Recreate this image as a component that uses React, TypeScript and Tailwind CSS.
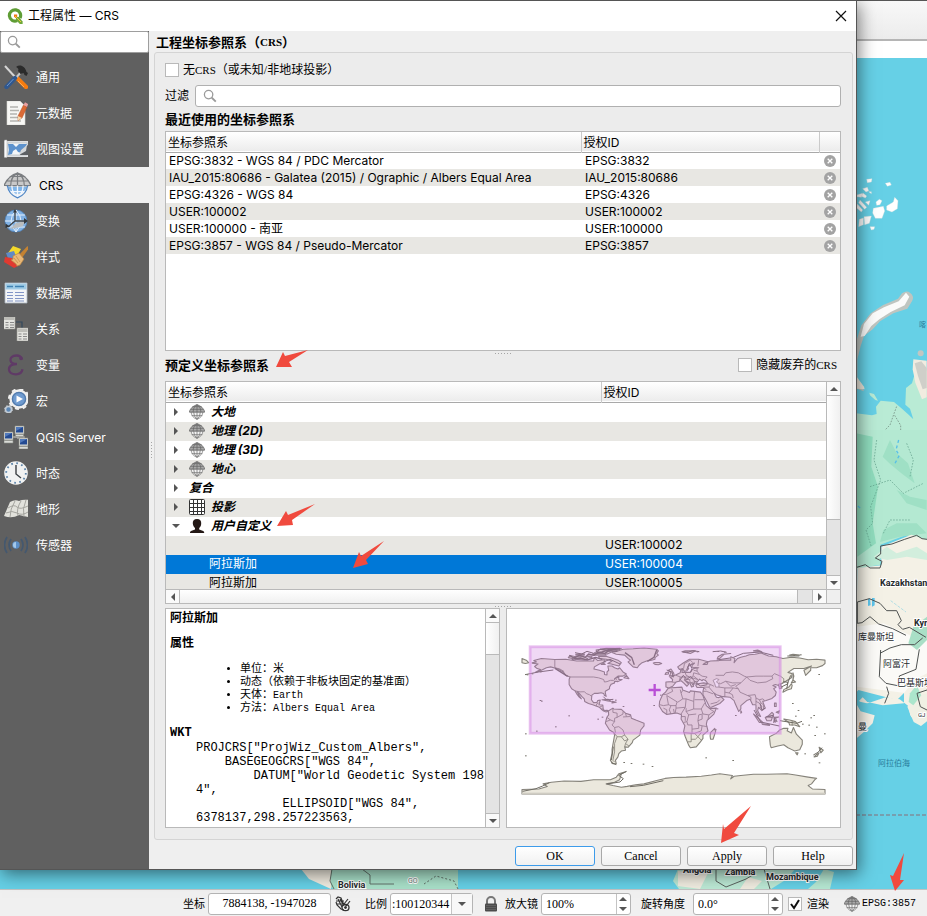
import { useState, type ReactNode } from "react";

const SANS = "font-['Inter','Noto_Sans_CJK_SC',sans-serif]";
const SERIF = "font-['Liberation_Serif','Noto_Sans_CJK_SC',serif]";
const MONO = "font-['Liberation_Mono','Noto_Sans_CJK_SC',monospace]";

/* ---------- icons ---------- */

function Icon({ children, size = "size-6" }: { children: ReactNode; size?: string }) {
  return (
    <svg viewBox="0 0 24 24" className={`${size} shrink-0`} fill="none" aria-hidden="true">
      {children}
    </svg>
  );
}

function SearchIcon() {
  return (
    <svg viewBox="0 0 14 14" className="size-[14px] shrink-0" fill="none" stroke="#9a9a9a" aria-hidden="true">
      <circle cx="5.6" cy="5.6" r="4.2" strokeWidth="1.3" />
      <path d="M8.8 8.8 12.8 12.6" strokeWidth="1.9" />
    </svg>
  );
}

function QgisLogo() {
  return (
    <svg viewBox="0 0 16 16" className="size-4 shrink-0" fill="none" aria-hidden="true">
      <path d="M10.2 12.6A5.6 5.6 0 1 1 13 10" stroke="#5f9d35" strokeWidth="3.2" />
      <path d="M9 9h3l3.6 4.4V16h-2.8L9 12z" fill="#6fa83a" />
      <path d="M7 6.6h3.2v1.8l-1.6 1.8L7 8.6z" fill="#ee7913" />
      <path d="M8 8l6 6" stroke="#efc83a" strokeWidth="1" />
    </svg>
  );
}

function ToolsIcon() {
  return (
    <Icon>
      <path d="M1 1l11 12" stroke="#d5d5d5" strokeWidth="2" />
      <path d="M13 13l9 9" stroke="#f57c10" strokeWidth="4.4" strokeLinecap="round" />
      <path d="M14 16l6 6" stroke="#ffab55" strokeWidth="1" />
      <path d="M18 6L10 15" stroke="#c9c9c9" strokeWidth="2" />
      <path d="M11 13L2.5 22" stroke="#30588f" strokeWidth="4.4" strokeLinecap="round" />
      <path d="M9.5 14L3 21" stroke="#6e96cb" strokeWidth="1" />
      <path d="M12 2c4-3 9-1 10.500 5l1.500 1-1.500 3-2-1-1-2-3 1-2.500-3c1-2 0-3-2-4z" fill="#2b2b2b" />
    </Icon>
  );
}

function MetadataIcon() {
  return (
    <Icon>
      <path d="M3 0h13l5 5v19H3z" fill="#f7f7f5" stroke="#d6d6d2" strokeWidth=".6" />
      <path d="M6 6h8M6 9.500h9M6 13h7M6 16.500h8M6 20h11" stroke="#b4b4b0" strokeWidth="1.400" />
      <path d="M19.500 4l3.500 2L18 17l-4 2.500V15z" fill="#dc6a35" stroke="#b04d20" strokeWidth=".5" />
      <path d="M19.500 4l3.500 2 1.200-3-3.200-1.800z" fill="#e9a0a0" />
      <path d="M14 15l4 2-4 2.500z" fill="#f2d9b0" />
    </Icon>
  );
}

function ViewIcon() {
  return (
    <Icon>
      <path d="M0 4h24v16H0z" fill="#dfe1e3" />
      <path d="M.500 3h2.500v17.500H.500z" fill="#fafafa" stroke="#a9a9a9" strokeWidth=".5" />
      <path d="M4 6h19v12H4z" fill="#f4f6f8" stroke="#9fa4aa" strokeWidth=".5" />
      <path d="M4 7h5l3 3 3-3h8l-3 5-2 4-4-1-2-3-3 2-1 3-4 1 1-5z" fill="#5d92cd" />
      <path d="M24 8l-7 5-1 5h8z" fill="#5d6064" />
      <path d="M15 18l2-5 6-5-1 6z" fill="#d3d6d9" />
    </Icon>
  );
}

function GlobeIcon({ blue = false, size = "size-[14px]" }: { blue?: boolean; size?: string }) {
  return (
    <Icon size={size}>
      <path d="M3 12a9.500 11 0 0 0 18 0z" fill={blue ? "#7fb4e8" : "#f3f3f3"} />
      <path d="M0 12Q4 3 12 1q8 2 12 11l-3 1H3z" fill={blue ? "#c9c9c9" : "#a9a9a9"} />
      <g stroke={blue ? "#7a7d80" : "#666"} strokeWidth="1.100">
        <path d="M0 12Q4 3 12 1q8 2 12 11zM2 8h20M5 4h14M12 1v11M12 1Q6 4 6 12M12 1q6 3 6 11" />
      </g>
      <g stroke={blue ? "#f1f7ff" : "#7a7a7a"} strokeWidth="1.200">
        <path d="M12 12v11M7 12q0 7 5 11M17 12q0 7-5 11M4 17.500h16" />
      </g>
      <path d="M3 12q1 8 9 11 8-3 9-11" stroke={blue ? "#4f86c6" : "#777"} strokeWidth="1.100" />
    </Icon>
  );
}

function TransformIcon() {
  return (
    <Icon>
      <circle cx="12" cy="12" r="11" fill="#80b1e4" stroke="#4c7fb6" strokeWidth=".8" />
      <path d="M1 12h22M3 6h18M3 18h18M12 1v22M12 1Q2 12 12 23M12 1q10 11 0 22" stroke="#e3effc" strokeWidth="1" />
      <path d="M6 20l6-6 9-2-2 5-7 2z" fill="#b9bcbe" />
      <path d="M11 3v9L4 18M11 12h11" stroke="#3d4247" strokeWidth="1.300" />
      <path d="M9 3.500L11 0l2 3.500zM1.500 14.500V19l4.500-1.500zM20 9l4 3-4 3z" fill="#33383d" />
    </Icon>
  );
}

function StyleIcon() {
  return (
    <Icon>
      <path d="M4 8l5-7 8 3-4 7z" fill="#f4d92a" />
      <path d="M2 8l8-2 3 8-8 2z" fill="#5f8ac6" />
      <path d="M1 12l7 1 6 8-4 2-10-6z" fill="#e03a30" />
      <path d="M15 10l3 3 7-10-1.500-2z" fill="#c48232" />
      <path d="M9 11l6-3 5 6-4 6-3 1-1-2-5-4 2-1z" fill="#e9b877" stroke="#b98544" strokeWidth=".7" />
      <path d="M10 13l4 5M12 11l4 6" stroke="#c28f4e" strokeWidth=".8" />
    </Icon>
  );
}

function DataSourceIcon() {
  return (
    <Icon>
      <path d="M1 2h22v20H1z" fill="#f3f5f7" stroke="#aeb9c4" strokeWidth=".8" />
      <path d="M1.500 2.500h21v6h-21z" fill="#9fcbe6" />
      <path d="M3 5.500h6M11 5.500h9" stroke="#3f82b3" strokeWidth="1.600" />
      <path d="M3 11.500h6M3 14.500h6M3 17.500h6M3 20h6M11 11.500h9M11 14.500h9M11 17.500h9M11 20h9" stroke="#8295c6" strokeWidth="1.200" />
    </Icon>
  );
}

function RelationIcon() {
  return (
    <Icon>
      <path d="M12 5h6v8" stroke="#33485c" strokeWidth="1.200" />
      <path d="M-1-1h12v13H-1zM13 11h12v13H13z" fill="#e4e4e0" stroke="#9a9a96" strokeWidth=".6" />
      <path d="M0 0h10.500v3H0zM13.500 12h10v3h-10z" fill="#bdbdb8" />
      <path d="M1.500 5.500h3M6 5.500h4M1.500 8h3M6 8h4M1.500 10.500h3M6 10.500h4M14.500 17h3M19 17h4M14.500 19.500h3M19 19.500h4M14.500 22h3M19 22h4" stroke="#888" strokeWidth="1.200" />
    </Icon>
  );
}

function VariableIcon() {
  return (
    <Icon>
      <path d="M18 6.500Q17 2.500 12.500 2.500C8 2.500 6 5 6.500 7.500 7 10 9.500 11 13 11M13 11.200c-5 0-8 2-8 5.300 0 3 3 4.800 7 4.800 4 0 6-2 6.500-5" stroke="#5f3a66" strokeWidth="2.300" />
      <circle cx="17" cy="5.500" r="1.800" fill="#5f3a66" />
    </Icon>
  );
}

function MacroIcon() {
  return (
    <Icon>
      <circle cx="15" cy="10" r="8.500" fill="#5d84b8" stroke="#f0f0ef" strokeWidth="2.400" />
      <circle cx="15" cy="10" r="10" stroke="#f0f0ef" strokeWidth="2" strokeDasharray="4 3.850" />
      <circle cx="15" cy="10" r="6.400" fill="#6f9bd0" stroke="#47719f" strokeWidth=".8" />
      <path d="M12.500 6.500l6.500 3.500-6.500 3.500z" fill="#fff" />
      <circle cx="4.500" cy="20.500" r="3" fill="#5b86b5" stroke="#c4ccd4" strokeWidth="1.500" />
      <circle cx="4.500" cy="20.500" r="4" stroke="#c4ccd4" strokeWidth="1" strokeDasharray="1.600 1.540" />
    </Icon>
  );
}

function ServerIcon() {
  return (
    <Icon>
      <path d="M14 9v5M8 12h12v4" stroke="#b0b0ac" strokeWidth="1.300" />
      <g fill="#d9dbd7" stroke="#8b8e88" strokeWidth=".6">
        <path d="M11 1h9v8h-9zM0 7h9v8H0zM15 13h9v8h-9z" />
        <path d="M11.500 9.500h8v2h-8zM0 15.500h9v2.500H0zM15 21.500h9V24h-9z" />
      </g>
      <path d="M12 2h7v5.500h-7zM1 8h7v5.500H1zM16 14h7v5.500h-7z" fill="#234a92" />
      <path d="M12 2h7l-7 4zM1 8h7l-7 4zM16 14h7l-7 4z" fill="#5179bb" />
    </Icon>
  );
}

function ClockIcon() {
  return (
    <Icon>
      <circle cx="12" cy="12" r="11.800" fill="#f1f2f2" />
      <circle cx="12" cy="12" r="9.800" stroke="#5a82a8" strokeWidth="1.800" strokeDasharray="1.700 3.430" />
      <path d="M12 4v9l5 4" stroke="#3d4145" strokeWidth="1.400" />
    </Icon>
  );
}

function TerrainIcon() {
  return (
    <Icon>
      <path d="M6 5q5-3 9-1 4-2 10-1l-1 17-9-2q-7 4-15 1z" fill="#e2e2dc" />
      <path d="M11 4Q6 12 6 20M17 4q-5 8-3 15M22 3q-4 9-2 17M4 11q6-4 9-1t11-1M2 16q6-3 11 0t11-1" stroke="#9d9d97" strokeWidth=".9" />
    </Icon>
  );
}

function SensorIcon() {
  return (
    <Icon>
      <circle cx="12" cy="12" r="3.700" fill="#5c90c9" />
      <path d="M9 12a3 3 0 0 1 3-3v6a3 3 0 0 1-3-3z" fill="#a4c8ea" />
      <path d="M7 6q-4 6 0 12M17 6q4 6 0 12M3 4q-5 8 0 16M21 4q5 8 0 16" stroke="#44586f" strokeWidth="1.700" />
    </Icon>
  );
}

function GridIcon() {
  return (
    <svg viewBox="0 0 16 16" className="size-4 shrink-0" aria-hidden="true">
      <rect x=".5" y=".5" width="15" height="15" rx="1" fill="#fff" stroke="#333" />
      <path d="M4.500 0v16M8.500 0v16M12.500 0v16M0 4.500h16M0 8.500h16M0 12.500h16" stroke="#333" />
    </svg>
  );
}

function UserIcon() {
  return (
    <svg viewBox="0 0 16 16" className="size-4 shrink-0" aria-hidden="true">
      <path d="M8 1c3 0 4.500 2 4.200 4.500 0 2-1 3.500-2 4.500v1.500l4 1.500c.800.500 1 1 1 2H1c0-1 .2-1.500 1-2l4-1.500V10C5 9 4 7.500 3.800 5.500 3.500 3 5 1 8 1z" fill="#231815" />
    </svg>
  );
}

function LockIcon() {
  return (
    <svg viewBox="0 0 14 16" className="h-4 w-[14px] shrink-0" fill="none" aria-hidden="true">
      <path d="M3 8V5a4 4 0 0 1 8 0v3" stroke="#777" strokeWidth="2" />
      <rect x="1" y="7.500" width="12" height="8" rx="1" fill="#4b4b4b" />
      <path d="M2 9.500h10M2 11.500h10M2 13.500h10" stroke="#6a6a6a" strokeWidth=".7" />
    </svg>
  );
}

function ExtentsIcon() {
  return (
    <svg viewBox="0 0 16 16" className="size-4 shrink-0" fill="none" stroke="#333" aria-hidden="true">
      <path d="M1 3l2-2 3 1 2 5 4 3M1 6l1 3 4 4 3 1M3 3l4 8M5 3l4 7M1 5l8 0M2 8h7" strokeWidth="1.200" />
      <ellipse cx="10.500" cy="11.500" rx="3.500" ry="3.200" strokeWidth="1.300" />
      <circle cx="10.500" cy="11.500" r="1" fill="#333" />
      <path d="M9 8l4-5M12 9l3-4" strokeWidth="1.200" />
    </svg>
  );
}

function Triangle({ dir }: { dir: "up" | "down" | "left" | "right" }) {
  const d = {
    up: "M0 6L4 2l4 4z",
    down: "M0 2h8L4 6z",
    left: "M6 0v8L2 4z",
    right: "M2 0v8l4-4z",
  }[dir];
  return (
    <svg viewBox="0 0 8 8" className="size-2 shrink-0" aria-hidden="true">
      <path d={d} fill="#555" />
    </svg>
  );
}

/* ---------- small controls ---------- */

function CheckBox({ id, checked, onChange }: { id: string; checked: boolean; onChange: (v: boolean) => void }) {
  return (
    <span className="grid size-[14px] shrink-0">
      <input
        id={id}
        type="checkbox"
        checked={checked}
        onChange={(e) => onChange(e.target.checked)}
        className="col-start-1 row-start-1 size-[14px] appearance-none border border-[#b9b9b9] bg-white"
      />
      {checked && (
        <svg viewBox="0 0 14 14" className="pointer-events-none col-start-1 row-start-1 size-[14px]" fill="none" aria-hidden="true">
          <path d="M3 7l3 4 5-8" stroke="#111" strokeWidth="2" />
        </svg>
      )}
    </span>
  );
}

function Spin({ id, value, label }: { id: string; value: string; label: string }) {
  const [text, setText] = useState(value);
  return (
    <div className="flex h-[22px] w-[90px] shrink-0 rounded-[3px] border border-[#b4b4b4] bg-white">
      <input
        id={id}
        value={text}
        onChange={(e) => setText(e.target.value)}
        className="min-w-0 flex-1 pl-1 outline-none"
      />
      <div className="flex w-[14px] flex-col border-l border-[#c4c4c4]">
        <button type="button" aria-label={`${label} +`} className="flex flex-1 items-center justify-center">
          <Triangle dir="up" />
        </button>
        <button type="button" aria-label={`${label} -`} className="flex flex-1 items-center justify-center">
          <Triangle dir="down" />
        </button>
      </div>
    </div>
  );
}

function VScroll({ thumb }: { thumb: string }) {
  return (
    <div className="flex w-[14px] shrink-0 flex-col border-l border-[#b9b9b9] bg-[#e4e4e4]">
      <button type="button" aria-label="向上滚动" className="flex h-[14px] items-center justify-center border-b border-[#b9b9b9] bg-[#fafafa]">
        <Triangle dir="up" />
      </button>
      <div className={`${thumb} border-b border-[#b9b9b9] bg-linear-to-r from-white to-[#f0f0f0]`} />
      <div className="flex-1" />
      <button type="button" aria-label="向下滚动" className="flex h-[14px] items-center justify-center border-t border-[#b9b9b9] bg-[#fafafa]">
        <Triangle dir="down" />
      </button>
    </div>
  );
}

function Dots() {
  return (
    <div className="flex h-1 shrink-0 items-center justify-center gap-[2px]">
      {[0, 1, 2, 3, 4, 5].map((i) => (
        <span key={i} className="size-px bg-[#a5a5a5]" />
      ))}
    </div>
  );
}

/* ---------- data ---------- */

const NAV: { label: string; icon: ReactNode }[] = [
  { label: "通用", icon: <ToolsIcon /> },
  { label: "元数据", icon: <MetadataIcon /> },
  { label: "视图设置", icon: <ViewIcon /> },
  { label: "CRS", icon: <GlobeIcon blue size="size-[27px]" /> },
  { label: "变换", icon: <TransformIcon /> },
  { label: "样式", icon: <StyleIcon /> },
  { label: "数据源", icon: <DataSourceIcon /> },
  { label: "关系", icon: <RelationIcon /> },
  { label: "变量", icon: <VariableIcon /> },
  { label: "宏", icon: <MacroIcon /> },
  { label: "QGIS Server", icon: <ServerIcon /> },
  { label: "时态", icon: <ClockIcon /> },
  { label: "地形", icon: <TerrainIcon /> },
  { label: "传感器", icon: <SensorIcon /> },
];

const RECENT = [
  ["EPSG:3832 - WGS 84 / PDC Mercator", "EPSG:3832"],
  ["IAU_2015:80686 - Galatea (2015) / Ographic / Albers Equal Area", "IAU_2015:80686"],
  ["EPSG:4326 - WGS 84", "EPSG:4326"],
  ["USER:100002", "USER:100002"],
  ["USER:100000 - 南亚", "USER:100000"],
  ["EPSG:3857 - WGS 84 / Pseudo-Mercator", "EPSG:3857"],
];

const GROUPS: { label: string; icon?: ReactNode; open?: boolean }[] = [
  { label: "大地", icon: <GlobeIcon size="size-4" /> },
  { label: "地理 (2D)", icon: <GlobeIcon size="size-4" /> },
  { label: "地理 (3D)", icon: <GlobeIcon size="size-4" /> },
  { label: "地心", icon: <GlobeIcon size="size-4" /> },
  { label: "复合" },
  { label: "投影", icon: <GridIcon /> },
  { label: "用户自定义", icon: <UserIcon />, open: true },
];

const USER_CRS = [
  ["", "USER:100002"],
  ["阿拉斯加", "USER:100004"],
  ["阿拉斯加", "USER:100005"],
];

/* ---------- world preview (points are longitude,latitude) ---------- */

const LAND = [
  "-168,66 -163,67 -166,68.5 -157,71 -141,69.7 -128,70 -115,68 -108,68 -95,68 -94,72 -90,68.5 -82,69.5 -81,67 -87,65 -94,61 -94.5,58.5 -88,57 -82,55 -82,52 -79,51.5 -79,55 -77,57 -78,62 -73,62 -70,60 -66,58.5 -64,60 -60,55 -56,52.5 -60,50 -66,50 -70,47 -65,49 -65,46 -61,46 -66,43.5 -70,44 -70,42 -74,40.5 -76,37 -76,35 -81,32 -81,30 -80,26 -82,27 -83,29.5 -86,30.3 -90,29.5 -94,29.5 -97,27.5 -97.5,22 -95,18.5 -91,18.7 -90,21 -87,21.5 -88,18 -88.5,16 -84,15.8 -83.5,11 -82,9 -79,9.5 -77.5,8.5 -80,7.5 -83,8.5 -86,11 -88,13 -92,14.5 -96,16 -101,17.5 -105.5,20 -106,23 -109,26 -112.5,30 -114.5,31.5 -112,27 -109.5,23 -112,25 -115,29 -117,32.5 -121,35 -124,40 -124,46 -123,49 -128,51 -131,55 -137,58.5 -146,61 -151,60 -154,58.5 -160,55.5 -164,54.7 -158,58 -162,59 -165,61.5 -161,64.5 -168,65.5",
  "-73,78 -66,80 -60,82 -48,82.5 -35,83.5 -20,82 -18,80 -20,77 -18,75 -22,72 -22,70 -26,69 -32,68 -38,65.5 -41,63 -43,60 -48,61 -52,65 -54,67 -51,69 -54,71 -58,75 -68,76",
  "-62,66 -65,62 -74,64.5 -78,65 -73,68 -80,70 -88,71 -89,73.5 -80,73.7 -72,71 -66,69",
  "-117,70 -105,69 -102,71 -107,73 -117,73",
  "-125,72 -120,71 -116,73 -123,74.5",
  "-90,77 -78,76.5 -73,79 -65,81 -62,82.8 -80,83 -92,81",
  "-96,75 -80,75 -82,77 -96,76.5",
  "-102,73 -97,72 -97,74 -102,74",
  "-116,75 -106,75 -106,76.5 -116,76",
  "-86,64 -81,64 -84,66",
  "-59,48 -53,47 -56,51",
  "-24,65.5 -22,64 -18,63.5 -14,65 -17,66.3 -22,66.3",
  "-77.5,8.5 -72,12 -71,11 -62,10.5 -57,6 -51,4 -50,0 -44,-2.5 -35,-6 -35,-9 -39,-14 -40,-20 -48,-26 -49,-29 -54,-34.5 -58,-34 -57,-38 -62,-39 -65,-42 -66,-46 -69,-50 -68,-54 -72,-54 -75,-50 -73,-42 -73,-37 -70,-20 -71,-17 -76,-14 -81,-6 -80,-2 -79,1.5 -77,4",
  "-6,36 10,37 11,33.5 19,30.5 20,32.5 32,31 35,27 37,21 39,15 43,11.5 51,12 48,5 40,-2.5 39,-7 41,-15 35,-20 35,-24 32,-28 27,-34 20,-35 18,-32 14,-22 12,-16 13.5,-9 9,-1 9.5,4 4,6.3 -4,5.2 -8,4.5 -13,8 -17,14.5 -16.5,20 -13,28 -9.5,31",
  "49,-12 50,-16 47,-25 44,-25 43.5,-21 44,-17",
  "-9,37 -9,43 -1.5,43.5 -1,46 -4,48.5 2,51 8,54 8.5,57 10.5,57.5 10,54.5 20,54.5 22,57.5 24,59 30,60 22,60.5 22,63 25,65.5 21,64 17,61 18,59 16,56.5 12.5,56 11,59 7,58 5,61 12,66 19,70 30,70 41,67 40,64 35,64 38,66 44,68 54,68.5 60,69 68,69 68,73 73,71 72,66 76,71 80,72.5 86,74 90,75.5 97,76 104,77.5 113,74 122,73 130,71 140,72.5 150,71.5 160,69.5 170,70 180,69 180,65 177,62.5 170,60 163,60 163,57 157,51 155,57 164,62 155,59 143,59 136,54.5 141,53 140,48 132,43 127,40 129,36 126,35 125,39 121,40 118,39 122,37 119,35 122,31 121,27 117,23.5 110,21 106,20 109,12 105,9 103,11 101,13 100,9 103.5,2 101,3 98,9 98,16 94,16 91,22.5 87,21 80,15 80,11 77.5,8 73,18 72,21 67,25 57,26 51,28 48,30 51,25 54,24.5 56.5,25.5 60,22 55,17.5 45,13 43,13 39,21 35,28 35,32 36,36.5 28,36.5 26.5,39 29,41 36,42 41,41 38,45 35,46 34,44.5 31,46.5 28,43 27,41 23,40.5 24,38 21.5,37 19.5,41.5 13,45.5 18,40.5 16,38 12,42 9,44.5 3,43 -1,38 -5.5,36",
  "-5,50 1,51 0,54 -3,58.5 -6,57 -3,54",
  "-10,52 -6,52.5 -6,55 -9,54",
  "52,71 55,71 60,76 68,77 58,76 53,73",
  "10,79 20,77 26,80 14,80",
  "95,80 105,79 100,81",
  "138,75 150,75 142,76",
  "130,31 135,33.5 140,35 141,39 140,41 137,37 131,34",
  "140,42 145,43 142,45.5",
  "142,46 143,50 142,54",
  "95,5 99,2 106,-5 102,-5 98,1",
  "105,-6.5 114,-7.5 114,-8.5 106,-7.5",
  "109,1 113,3 117,7 119,5 116,-3 111,-3",
  "119,-5 120,1 125,1.500 121,0 123,-4 121,-3",
  "131,-1 138,-2 145,-4 150,-10 144,-8 138,-8 137,-5",
  "120,18 122,18 122,14 120,14",
  "122,7 126,9 125,6",
  "114,-22 122,-18 126,-14 131,-12 136,-12 135,-15 140,-17.5 142.5,-11 146,-19 153,-26 153,-31 150,-37.5 144,-39 140,-37 136,-35 131,-31.5 124,-33 116,-35 115,-32",
  "145,-41 148,-41 147,-43.500",
  "173,-34.500 178,-38 175,-41 174,-38",
  "173,-41 171,-45 167,-46 170,-43",
  "-85,22 -78,22.500 -74,20 -78,20.500",
  "-73,20 -68,19 -73,18",
  "80,9 81,7 80,6",
  "-180,71 -175,69 -172,66 -176,65 -180,66",
  "-180,-90 180,-90 180,-84.700 165,-84 160,-80 164,-78 168,-73 170,-71.500 160,-70 145,-67.500 135,-66 110,-66.500 95,-66.500 80,-68 72,-69 68,-72 70,-68 55,-66 45,-67.500 33,-69 15,-70 0,-70.500 -10,-71.500 -20,-74 -35,-78 -45,-79 -55,-81 -62,-82 -72,-80 -80,-78 -70,-76 -64,-73 -62,-66 -57,-63.500 -65,-66 -68,-70 -75,-73 -95,-73 -110,-75 -130,-74.500 -145,-76 -155,-78 -150,-81 -160,-84 -180,-84.700",
];

const BORDERS = [
  "-141,69.7 -141,60 -135,58.5 -130,55.500",
  "-123,49 -95,49 -89,48 -83,46 -82,43 -79,43.500 -75,45 -71,45 -69,47 -67,45",
  "-117,32.500 -111,31.300 -106,31.500 -103,29 -100,28 -97,26",
  "-92,14.500 -91,17.500 -89,18", "-88,13 -84,15", "-86,11 -83.500,11",
  "-77.500,8.500 -77,7", "-72,12 -72,7 -67,6 -67,1 -70,0 -70,-4 -75,-2 -79,1",
  "-67,1 -60,5 -60,8", "-60,1.500 -52,2 -51,4", "-57,6 -56,2", "-80,-4 -75,-2",
  "-70,-4 -73,-8 -70,-11 -69,-17 -70,-18", "-70,-11 -65,-10 -60,-14 -58,-20 -62,-22 -67,-22 -70,-18",
  "-67,-22 -70,-30 -70,-40 -72,-50 -70,-52", "-58,-20 -54,-25 -58,-27 -62,-22", "-54,-25 -57,-30 -53,-33", "-57,-30 -58,-34",
  "-2,35 -1,32 -8,28.500 -13,28", "-8,27 5,19 11,23 9,30 8,34", "9,30 11,33", "11,23 15,23 24,20 25,32", "25,22 36,22",
  "-8,27 -6,16 -12,15 -16,16", "-6,16 -3,15 3,15 4,19", "3,15 3,12 14,13 15,23", "3,12 2,6", "14,13 9,5", "15,12 15,8 24,11 24,20",
  "24,11 33,11 37,18", "33,11 35,5 42,4 48,8 43,11", "42,4 41,-1.500", "35,5 30,4 29,-3 34,-1 34,4", "29,-3 30,-8 34,-9 40,-10",
  "15,8 18,4 27,5", "18,4 16,-4 12,-5", "9,2 14,2 14,-3", "16,-4 17,-8 22,-8 22,-13 30,-12 30,-8", "22,-13 22,-18 12,-17", "22,-18 25,-18 33,-15 34,-9",
  "21,-18 21,-28 17,-28", "21,-25 26,-25 29,-22 33,-26", "25,-18 29,-22 33,-17", "-3,15 -5,10 -3,5", "0,11 1,6", "-12,12 -8,10 -8,5",
  "-2,43 3,42.500", "3,51 8,49 7,44", "8,49 14,49 13,46", "14,54 15,51 19,49 23,49 24,54", "14,49 19,49", "13,46 19,46 22,48 29,46", "19,46 20,42 28,44", "20,42 23,41",
  "24,54 31,52 34,50 40,49 38,47", "24,57 28,56 31,52", "28,60 28,56", "30,70 29,62", "12,59 13,65 20,69 23,66", "24,50 29,46",
  "36,37 42,37 44,40 41,41", "44,40 48,38", "42,37 48,30", "35,32 39,32 47,29", "36,36 39,34", "44,17 52,19 55,22", "61,25 61,36 54,37",
  "61,31 66,30 71,36 61,36", "66,30 70,28 71,24", "71,36 77,35 79,31 88,27 97,28 98,24 102,22 106,23 108,21.500",
  "50,51 60,51 62,54 70,55 77,54 84,50 87,49 80,42 70,42 62,44 56,41 54,42", "62,44 68,38 74,40", "80,42 74,38 77,35",
  "87,49 98,50 107,50 117,50 120,53 127,50 131,47 131,43", "87,49 91,45 100,42 110,43 118,47 117,50", "98,24 98,17", "102,22 104,18 107,16 107,11", "98,20 102,18 105,14 102,12", "88,27 92,25 92,22",
  "124,40 130,42", "126,38 128,38.500", "141,-3 141,-9", "109,1 115,2 117,4",
];

const SPECKS: [number, number][] = [
  [123, 302], [119, 300], [205, 346], [292, 356], [165, 379], [75, 400], [108, 392], [75, 466], [370, 486], [428, 491], [392, 489],
  [616, 472], [697, 480], [460, 315], [455, 498], [560, 156], [590, 154], [652, 153], [672, 155], [880, 165], [900, 163], [885, 347],
  [893, 330], [940, 345], [931, 352], [876, 309], [948, 380], [943, 405], [972, 400], [913, 460], [705, 345], [650, 325], [645, 388],
  [345, 299], [368, 318], [925, 374], [906, 371], [305, 350], [480, 284], [956, 487], [80, 223], [95, 220], [120, 214], [955, 222],
];

function WorldPreview() {
  return (
    <svg viewBox="21 27 999 654" className="size-full" role="img" aria-label="世界地图范围预览">
      <g transform="translate(520.5 354.7) scale(2.525 -2.525)" strokeLinejoin="round">
        <g fill="#ebe8dd" stroke="#85827a" strokeWidth="1.300">
          {LAND.map((points) => (
            <polygon key={points} points={points} />
          ))}
        </g>
        <polygon points="47,45 51,47 54,46 51,43 54,41 54,37 50,37 49,41" fill="#fff" stroke="#85827a" strokeWidth=".9" />
        <g fill="none" stroke="#85827a" strokeWidth="1">
          {BORDERS.map((points) => (
            <polyline key={points} points={points} />
          ))}
        </g>
      </g>
      <g fill="none" stroke="#6f6c64" strokeWidth="4">
        <path d="M208 166l14 8 16-8 18 6 10-10 16 4 12-10 20 4 14-8 24 2M215 178l26-4 20 6 26-8 20 6M290 160l30-8 40-5M300 148l60-3M470 150l-8 22-20 12M375 158l20 14 8 22M165 205l38 24" />
        <path d="M225 158l20 4 16-8 20 6 20-12 30 6M310 186l20-8 30 14M333 488l16 6M340 440l-6 40M320 552l40-6 10-10-14-10 24-12M68 574l40-8 20-8 20-10M390 560l40-4 60-14M75 224l40-8 45-6" strokeWidth="3" />
        <path d="M548 156h18l12-4 20 3M638 155l24-2 18 4M650 180l40-6M700 172l30-12 50-4 40 10M862 168h36M840 362l50 8 16-6M762 330l20 36 56 12M842 262l20-10 10-26M850 245l14 2-4 20M780 310l6 20 10-6M800 350l20-4 6 22" strokeWidth="3" />
        <path d="M540 240l10-14 10 12 12-8 14 16-10 10M560 210l8-20 8 16-4 10M590 250l12 8 20-4M500 210l16 6 4 16M310 290l10 10 20-2M800 350l16 2M940 465l14-8 12-14" strokeWidth="3" />
      </g>
      <g fill="#77746b">
        {SPECKS.map(([x, y]) => (
          <rect key={`${x}-${y}`} x={x} y={y} width="5" height="3" />
        ))}
      </g>
      <rect x="66" y="578" width="909" height="5" fill="#cfccc2" />
      <rect x="87" y="137" width="757" height="266" fill="#c86edb" fillOpacity=".27" />
      <rect x="90" y="140" width="751" height="260" fill="none" stroke="#d88ae6" strokeOpacity=".3" strokeWidth="9" />
      <rect x="92" y="142" width="747" height="256" fill="none" stroke="#d88ae6" strokeOpacity=".3" strokeWidth="5" />
      <path d="M464 252v36M446 270h36" stroke="#b94fd6" strokeWidth="7" />
    </svg>
  );
}

/* ---------- map canvas behind the dialog ---------- */

function MapCanvas() {
  return (
    <svg viewBox="0 58 927 831" preserveAspectRatio="xMaxYMin slice" className="size-full bg-[#66d0e6]" role="img" aria-label="地图画布">
      <g transform="translate(850 0) scale(.33333)">
        <path
          d="M50 538l16-2-2 10-12 2zM106 550l14-3 4 8-12 4zM110 618l20-12 4-14 10 10-2 24-16 10-16-6zM70 625l30-6 4 14-8 22-20 0-8-16zM78 606l10-8 8 4-6 12-10 2zM22 612l16 18-4 6-14-12zM30 600l20 22-6 6-18-20zM40 580l10 8-4 6-14-6zM38 566l14-4 4 10-8 4zM22 584l16-4-4 12-14-2zM28 658l12-4 0 20-14 6zM42 650l22-2-6 22-14 4zM60 680l14 0-2 8-8 2zM46 606l14-4-4 14zM56 575l8 0 0 6z"
          fill="#fff" stroke="#d9dddb" strokeWidth="1"
        />
        <path d="M20 1020l14-44 28-36 36-24 46-20 12-16q14-10 24-2 14 10 6 26l-14 22-42 14-40 24-22 24-26 20-10 30-10 40 0 60 20 36-22-8z" fill="#bfc5c0" />
        <path d="M32 1010l10-38 26-32 34-18 44-18 22-26 10 12-14 26-42 20-34 22-24 20-20 30z" fill="#fbfbfa" />
        <path d="M20 1130l22 30 2 8-24-2z" fill="#ede8dc" />
        <path d="M58 1178l14 4 12 20-8-2-16-14zM78 1220l14-18 40 4 24 20 20 18 14 14-10-32-14-12 2-50 18-14 10-34 35-4v345H18V1240l48 6 14-4z" fill="#b9ebd5" />
        <path d="M190 1078l40 4v110l-14 6-20-50-8-40z" fill="#f1ece0" />
        <path d="M194 1090l20-6 16 20v60l-12 4-14-40z" fill="#cfcfc9" />
        <circle cx="212" cy="1060" r="9" fill="#c1c6c2" />
        <path d="M20 1295h80l20-20 12-34 8-22M100 1370l22-50 30-22v-22l-18-30" fill="none" stroke="#687d73" strokeWidth="2" strokeDasharray="5 4" />
        <path d="M150 1320l20-12 30 2 8 14 22 2M145 1340l10-18" fill="none" stroke="#62bfe6" strokeWidth="6" strokeDasharray="9 4" />
      </g>
      <g transform="translate(850 440) scale(.33333)">
        <path d="M18-30h213v360l-60-46-80 30 0 60-72 12z" fill="#b4e9d2" />
        <path d="M18-20l50 10-4 90 20 60-16 110 10 60-56 40z" fill="#8fdcbd" />
        <path d="M120 0l20 40 34 30 20 60-40-30-36-30-20-20zM140 150l40 20 50 10v30l-60-20zM100 270l40-20 60 0 30 30-80 10-60 16z" fill="#9fe0c5" />
        <path d="M22 384l72-8 0-56 90-36 47 16v380l-30 40-60 60-116-30-8 10z" fill="#f4f1e6" />
        <path d="M110 320l30 20 60-20 31 20v20l-60-10-60 10-40-10z" fill="#d2eedd" />
        <path d="M20 560l80-10 90 40 41-20v170l-60 20-150-20z" fill="#fbfaf7" />
        <path d="M190 560l41-30v70l-30 30-26-20z" fill="#a9dfc6" />
        <path d="M20 790l18-18 14 14 46 10 64-6 0-30 30-40 39-20v140l-20 18-30-30-6-30-26-20-42-6-60 20z" fill="#f4f1e6" />
        <path d="M20 775l10 10 60 14 70-4 10 12 20 36 24 14 17-10v520H18z" fill="#66d0e6" />
        <path d="M172 800l26-30 33-10v84l-18 14-22-12z" fill="#f0f0e4" />
        <path d="M180 760l20-24 14 30-24 30-14-10z" fill="#ace6cc" />
        <path d="M18 790l14 24 42 12-6 24-24 24-26 22z" fill="#f6f2e8" />
        <path d="M54 478l6-4 2 22-8 2zM66 474h8v22l-8 4z" fill="#5dc4ea" />
        <path d="M146 0l-8 30 10 16-14 26M24 198l8 8" fill="none" stroke="#57bfe8" strokeWidth="4" strokeDasharray="9 8" />
        <path d="M122 482l46 34" fill="none" stroke="#8fd3e2" strokeWidth="2" strokeDasharray="9 4" />
        <g fill="none" stroke="#5d9b86" strokeWidth="2" strokeDasharray="5 4">
          <path d="M80 0l-8 60 20 60-30 80 6 50-20 20 16 50M170 10l20 50-10 50M60 140l60-20 40 40 60-30M100 280l20-40 60 0" />
        </g>
        <g fill="none" stroke="#4e5150" strokeWidth="3" strokeLinejoin="round">
          <path d="M20 382l26-8 14 10 30 0 6-20-20-10 16-12 0-24 34-6 38-14 36-12 16 10 15 2M22 550V486l36-10 32 14 20 22 30 0 14 30-10 12 14 14 20-6 50 30M22 550l14-2 24-18 26 22 42 14 40 20M90 640l30-16 34-10 40 0 24-20M92 630l-4 80 20 20 40 8 0-30 50-20 10-60M110 740l6 20-12 30M231 750l-30 10 10 40 20 10" />
        </g>
        <path d="M18 1125h213" stroke="#7d8f9d" strokeWidth="4" strokeDasharray="12 6" />
      </g>
      <path d="M303 869h155v20h-124l-18-9z" fill="#a9e0c9" />
      <path d="M301 869h30v20l-22-10z" fill="#f1ece0" />
      <path d="M332 869l-2 12 4 8M362 869l8 6v9h24" fill="none" stroke="#617068" strokeWidth="1" />
      <path d="M424 884l12-8 18 5 4 8" fill="none" stroke="#617068" strokeWidth="1" strokeDasharray="2 2" />
      <path d="M679 889l-6-8 5-12h117l-8 10-16 10z" fill="#bce9d5" />
      <path d="M678 871l30 2-8 16-22-3zM740 889l8-12 14 4-8 8z" fill="#f0ece0" />
      <path d="M808 889l8-7 8-13 10 3-4 17z" fill="#b6e8d3" />
      <path d="M716 869v12l10 6 20-8 10-6M764 869l6 20" fill="none" stroke="#5a625e" strokeWidth="1" />
      <g className="font-['Roboto','Noto_Sans_CJK_SC',sans-serif]" fontSize="9" fill="#262a2c" stroke="#fff" strokeWidth="2" paintOrder="stroke">
        <g fontWeight="700">
          <text x="338" y="888">Bolivia</text>
          <text x="683" y="873">Angola</text>
          <text x="725" y="875">Zambia</text>
          <text x="766" y="880">Mozambique</text>
          <text x="880" y="586">Kazakhstan</text>
          <text x="914" y="626">Kyr</text>
        </g>
        <text x="858" y="640">库曼斯坦</text>
        <text x="883" y="667">阿富汗</text>
        <text x="897" y="686">巴基斯坦</text>
        <text x="858" y="730">曼</text>
        <text x="918" y="717" fontSize="6">GJ</text>
        <text x="408" y="883" fontSize="7" fill="#5f7d74">GO</text>
      </g>
      <g className="font-['Noto_Sans_CJK_SC',sans-serif]" fill="#287d9b">
        <text x="878" y="766" fontSize="8">阿拉伯海</text>
        <text x="919" y="327" fontSize="7">喀</text>
      </g>
    </svg>
  );
}

/* ---------- dialog parts ---------- */

function Sidebar() {
  const [active, setActive] = useState("CRS");
  return (
    <aside className="flex w-[149px] shrink-0 flex-col bg-[#606060]">
      <div className="flex h-[22px] items-center gap-1 rounded-[2px] border border-[#9e9e9e] bg-white pl-[6px]">
        <SearchIcon />
        <input aria-label="搜索" className="min-w-0 flex-1 outline-none" />
      </div>
      <nav className="pt-[6px]">
        {NAV.map(({ label, icon }) => (
          <button
            key={label}
            type="button"
            onClick={() => setActive(label)}
            className={
              active === label
                ? "flex h-9 w-full items-center gap-2 bg-[#efefef] pl-1 text-black"
                : "flex h-9 w-full items-center gap-2 pl-1 text-white"
            }
          >
            {icon}
            <span className="pt-[2px]">{label}</span>
          </button>
        ))}
      </nav>
    </aside>
  );
}

function RecentTable() {
  return (
    <div className="h-[220px] shrink-0 border border-[#b9b9b9] bg-white">
      <table className="w-full table-fixed border-collapse text-left">
        <colgroup>
          <col />
          <col className="w-[238px]" />
          <col className="w-[21px]" />
        </colgroup>
        <thead>
          <tr className="h-[20px] border-b border-[#a9a9a9] bg-linear-to-b from-white to-[#ececec]">
            <th className="border-r border-[#cacaca] p-0 pt-[2px] pl-[2px] font-normal">坐标参照系</th>
            <th className="border-r border-[#cacaca] p-0 pt-[2px] pl-[2px] font-normal">授权ID</th>
            <td />
          </tr>
        </thead>
        <tbody>
          {RECENT.map(([name, id]) => (
            <tr key={name} className="h-[17px] even:bg-[#e8e7e3]">
              <td className="truncate p-0 pl-[3px]">{name}</td>
              <td className="p-0 pl-1">{id}</td>
              <td className="p-0">
                <button type="button" aria-label={`移除 ${id}`} className="mx-auto block size-3">
                  <svg viewBox="0 0 12 12" className="size-3" aria-hidden="true">
                    <circle cx="6" cy="6" r="6" fill="#a3a3a3" />
                    <path d="M3.700 3.700l4.600 4.600M8.300 3.700L3.700 8.300" stroke="#fff" strokeWidth="1.300" />
                  </svg>
                </button>
              </td>
            </tr>
          ))}
        </tbody>
      </table>
    </div>
  );
}

function CrsTree() {
  const [selected, setSelected] = useState("USER:100004");
  return (
    <div className="flex min-h-0 flex-1 flex-col border border-[#b9b9b9] bg-white">
      <div className="flex min-h-0 flex-1">
        <div className="min-w-0 flex-1 overflow-hidden">
          <table className="w-full table-fixed border-collapse text-left">
            <colgroup>
              <col />
              <col className="w-[225px]" />
            </colgroup>
            <thead>
              <tr className="h-[20px] border-b border-[#a9a9a9] bg-linear-to-b from-white to-[#ececec]">
                <th className="border-r border-[#cacaca] p-0 pt-[2px] pl-[2px] font-normal">坐标参照系</th>
                <th className="p-0 pt-[2px] pl-[2px] font-normal">授权ID</th>
              </tr>
            </thead>
            <tbody>
              {GROUPS.map(({ label, icon, open }) => (
                <tr key={label} className="h-[19px] even:bg-[#e8e7e3]">
                  <td className="p-0">
                    <button type="button" aria-expanded={!!open} className="flex h-[19px] items-center pl-[6px] font-bold italic">
                      <Triangle dir={open ? "down" : "right"} />
                      <span className="flex items-center gap-[6px] pl-[9px]">
                        {icon}
                        {label}
                      </span>
                    </button>
                  </td>
                  <td />
                </tr>
              ))}
              {USER_CRS.map(([name, id]) => (
                <tr
                  key={id}
                  onClick={() => setSelected(id)}
                  className={selected === id ? "h-[19px] bg-[#0078d7] text-white" : "h-[19px] bg-[#e8e7e3]"}
                >
                  <td className="p-0 pl-[43px]">{name}</td>
                  <td className="p-0 pl-1">{id}</td>
                </tr>
              ))}
            </tbody>
          </table>
        </div>
        <VScroll thumb="h-[124px]" />
      </div>
      <div className="flex h-[14px] shrink-0 border-t border-[#b9b9b9] bg-[#e4e4e4]">
        <button type="button" aria-label="向左滚动" className="flex w-[14px] items-center justify-center border-r border-[#b9b9b9] bg-[#fafafa]">
          <Triangle dir="left" />
        </button>
        <div className="flex-1 border-r border-[#b9b9b9] bg-linear-to-b from-white to-[#f0f0f0]" />
        <div className="w-[14px]" />
        <button type="button" aria-label="向右滚动" className="flex w-[15px] items-center justify-center border-x border-[#b9b9b9] bg-[#fafafa]">
          <Triangle dir="right" />
        </button>
        <div className="w-[13px] bg-[#efefef]" />
      </div>
    </div>
  );
}

const WKT = `PROJCRS["ProjWiz_Custom_Albers",
    BASEGEOGCRS["WGS 84",
        DATUM["World Geodetic System 198
4",
            ELLIPSOID["WGS 84",
6378137,298.257223563,`;

function Details() {
  return (
    <div className="flex min-w-0 flex-1 border border-[#b9b9b9] bg-white">
      <div className={`min-w-0 flex-1 overflow-hidden pt-1 pl-1 leading-[13px] ${MONO}`}>
        <h3 className="font-bold">阿拉斯加</h3>
        <h3 className="mt-3 font-bold">属性</h3>
        <ul className="mt-3 list-disc pl-[70px] text-[11px] leading-[13px]">
          <li>单位：米</li>
          <li>动态（依赖于非板块固定的基准面）</li>
          <li>天体：<span className="text-[10px]">Earth</span></li>
          <li>方法：<span className="text-[10px]">Albers Equal Area</span></li>
        </ul>
        <h3 className="mt-3 font-bold">WKT</h3>
        <pre className={`mt-px pl-[26px] leading-[14px] ${MONO}`}>{WKT}</pre>
      </div>
      <VScroll thumb="h-8" />
    </div>
  );
}

function Dialog() {
  const [noCrs, setNoCrs] = useState(false);
  const [hideOld, setHideOld] = useState(false);
  return (
    <section
      role="dialog"
      aria-label="工程属性 — CRS"
      className="absolute top-0 right-[70px] bottom-[46px] left-0 flex flex-col border-t border-r border-b border-[#555] bg-[#efefef] shadow-[2px_4px_16px_rgba(0,0,0,0.5)]"
    >
      <header className="flex h-[30px] shrink-0 items-center bg-white pr-[9px] pl-[7px]">
        <QgisLogo />
        <h1 className="flex-1 pl-[5px]">工程属性 — CRS</h1>
        <button type="button" aria-label="关闭">
          <svg viewBox="0 0 12 12" className="size-3" stroke="#111" strokeWidth="1.200" aria-hidden="true">
            <path d="M1 1l10 10M11 1L1 11" />
          </svg>
        </button>
      </header>
      <div className="flex min-h-0 flex-1">
        <Sidebar />
        <div className="flex w-[5px] shrink-0 flex-col items-center justify-center gap-[2px]">
          {[0, 1, 2, 3, 4, 5].map((i) => (
            <span key={i} className="size-px bg-[#a5a5a5]" />
          ))}
        </div>
        <div className="flex min-w-0 flex-1 flex-col pr-[3px] pb-[3px]">
          <h2 className="flex h-[21px] shrink-0 items-center pl-[2px] text-[13px] font-bold">
            工程坐标参照系（<span className={`text-[11px] ${SERIF}`}>CRS</span>）
          </h2>
          <div className="flex min-h-0 flex-1 flex-col rounded-[3px] border border-[#d4d4d4] bg-[#ececec] pt-[10px] pr-[11px] pb-[11px] pl-[10px]">
            <div className={`flex h-[14px] shrink-0 items-center gap-1 ${SERIF}`}>
              <CheckBox id="no-crs" checked={noCrs} onChange={setNoCrs} />
              <label htmlFor="no-crs">无<span className="text-[11px]">CRS</span>（或未知/非地球投影）</label>
            </div>
            <div className="mt-2 flex h-[22px] shrink-0 items-center gap-[6px]">
              <label htmlFor="filter">过滤</label>
              <div className="flex h-full flex-1 items-center gap-1 rounded-[3px] border border-[#b0b0b0] bg-white pl-[7px]">
                <SearchIcon />
                <input id="filter" className="min-w-0 flex-1 outline-none" />
              </div>
            </div>
            <h3 className="flex h-6 shrink-0 items-center text-[13px] font-bold">最近使用的坐标参照系</h3>
            <RecentTable />
            <Dots />
            <div className="mb-[6px] flex h-5 shrink-0 items-center justify-between">
              <h3 className="text-[13px] font-bold">预定义坐标参照系</h3>
              <div className={`flex items-center gap-1 pr-1 ${SERIF}`}>
                <CheckBox id="hide-old" checked={hideOld} onChange={setHideOld} />
                <label htmlFor="hide-old">隐藏废弃的<span className="text-[11px]">CRS</span></label>
              </div>
            </div>
            <CrsTree />
            <Dots />
            <div className="flex h-[220px] shrink-0 gap-[6px]">
              <Details />
              <div className="min-w-0 flex-1 border border-[#b9b9b9] bg-white">
                <WorldPreview />
              </div>
            </div>
          </div>
          <footer className={`mt-[6px] flex shrink-0 justify-end gap-[6px] ${SERIF}`}>
            {["OK", "Cancel", "Apply", "Help"].map((label) => (
              <button
                key={label}
                type="button"
                className="h-5 w-20 rounded-[3px] border border-[#a9a9a9] bg-linear-to-b from-white to-[#f1f1f1] first:border-[#3d9bea]"
              >
                {label}
              </button>
            ))}
          </footer>
        </div>
      </div>
    </section>
  );
}

function StatusBar() {
  const [coords, setCoords] = useState("7884138, -1947028");
  const [render, setRender] = useState(true);
  return (
    <footer className={`flex h-[27px] shrink-0 items-center justify-end border-t border-[#c2c2c2] bg-[#f0f0f0] pt-px pr-[11px] ${SERIF}`}>
      <label htmlFor="coords" className="pr-[3px] text-[11px]">坐标</label>
      <input
        id="coords"
        value={coords}
        onChange={(e) => setCoords(e.target.value)}
        className="h-[22px] w-[123px] rounded-[3px] border border-[#b4b4b4] bg-white text-center outline-none"
      />
      <button type="button" aria-label="切换范围" className="mx-1"><ExtentsIcon /></button>
      <label htmlFor="scale" className="pr-[3px] pl-[10px] text-[11px]">比例</label>
      <div className="flex h-[22px] w-[83px] shrink-0 items-center rounded-[3px] border border-[#b4b4b4] bg-white">
        <select id="scale" className="h-5 w-[60px] appearance-none pl-px outline-none">
          <option>:100120344</option>
        </select>
        <span className="flex h-full flex-1 items-center justify-center border-l border-[#c4c4c4] bg-[#f8f8f8]">
          <Triangle dir="down" />
        </span>
      </div>
      <button type="button" aria-label="锁定比例" className="mr-[7px] ml-[11px]"><LockIcon /></button>
      <label htmlFor="zoom" className="pr-[3px] text-[11px]">放大镜</label>
      <Spin id="zoom" label="放大镜" value="100%" />
      <label htmlFor="rotation" className="pr-2 pl-[10px] text-[11px]">旋转角度</label>
      <Spin id="rotation" label="旋转角度" value="0.0°" />
      <span className="w-[5px]" />
      <CheckBox id="render" checked={render} onChange={setRender} />
      <label htmlFor="render" className="pr-[15px] pl-[5px] text-[11px]">渲染</label>
      <button type="button" className="flex items-center gap-[2px]">
        <GlobeIcon size="size-4" />
        <span className={`text-[10px] ${MONO}`}>EPSG:3857</span>
      </button>
    </footer>
  );
}

const ARROWS = [
  "M308 350L285 356 283 352 276 367 292 367 289 362z",
  "M315 504L288 515 286 511 277 526 293 525 292 520z",
  "M384 541L361 556 359 552 353 568 368 564 366 560z",
  "M751 806L724 829 723 824 721 843 739 835 734 833z",
  "M904 853L893 876 890 875 895 891 904 880 900 880z",
];

export default function App() {
  return (
    <main className={`relative flex h-screen flex-col overflow-hidden bg-white text-xs leading-4 text-black ${SANS}`}>
      <div className="h-[41px] shrink-0 border-t border-b-2 border-t-[#555] border-b-[#b5b5b5] bg-linear-to-b from-[#f8f8f8] to-[#ececec]" />
      <div className="h-[17px] shrink-0 bg-white" />
      <div className="min-h-0 flex-1">
        <MapCanvas />
      </div>
      <StatusBar />
      <Dialog />
      <svg viewBox="0 0 927 916" className="pointer-events-none absolute inset-0 size-full" fill="#f04a3e" aria-hidden="true">
        {ARROWS.map((d) => (
          <path key={d} d={d} />
        ))}
      </svg>
    </main>
  );
}
